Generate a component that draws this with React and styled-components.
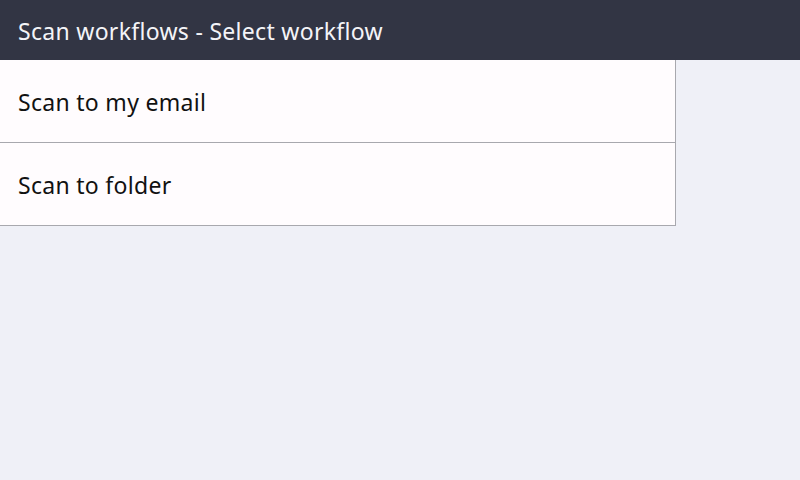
import React from 'react';
import styled, { createGlobalStyle } from 'styled-components';

const GlobalStyle = createGlobalStyle`
    html, body {
        margin: 0;
        padding: 0;
        background: #eff0f7;
    }
    body {
        width: 800px;
        height: 480px;
        overflow: hidden;
        font-family: "Noto Sans", "DejaVu Sans", sans-serif;
    }
`;

const workflows = ['Scan to my email', 'Scan to folder'];

export default function App() {
    return (
        <Screen>
            <GlobalStyle />
            <Header>Scan workflows - Select workflow</Header>
            <List>
                {workflows.map(name => (
                    <Item key={name}>{name}</Item>
                ))}
            </List>
        </Screen>
    );
}

const Screen = styled.div`
    width: 800px;
    height: 480px;
    display: flex;
    flex-direction: column;
    background: #eff0f7;
`;

const Header = styled.div`
    height: 60px;
    box-sizing: border-box;
    flex-shrink: 0;
    display: flex;
    align-items: center;
    padding: 2px 18px 0;
    background: #323544;
    color: #f4f4f8;
    font-size: 23px;
    letter-spacing: 0.3px;
`;

const List = styled.div`
    width: 675px;
    display: flex;
    flex-direction: column;
    background: #fffcfe;
    border-right: 1px solid #a8a8ae;
`;

const Item = styled.div`
    height: 82px;
    box-sizing: border-box;
    display: flex;
    align-items: center;
    padding: 2px 18px 0;
    color: #111;
    font-size: 23px;
    letter-spacing: 0.3px;
    border-bottom: 1px solid #a8a8ae;
    box-sizing: content-box;
    height: 80px;
`;
